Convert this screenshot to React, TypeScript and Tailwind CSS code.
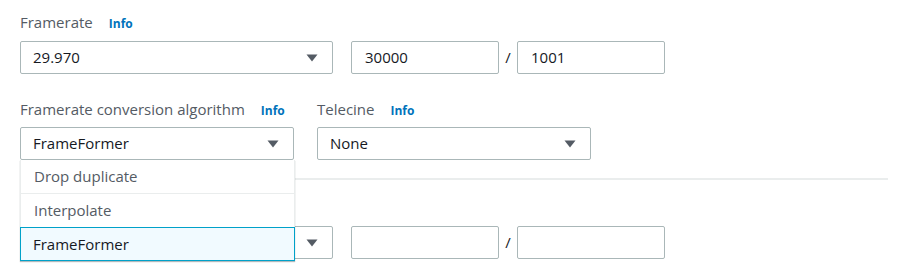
import React from "react";

const Arrow = () => (
  <svg width="12" height="8" viewBox="0 0 12 8" className="shrink-0">
    <path d="M0.5 0.5 H11.5 L6 7.5 Z" fill="#545b64" />
  </svg>
);

const Label = ({ text }: { text: string }) => (
  <div className="flex items-baseline h-[20px] gap-[16px]">
    <span className="text-[15px] text-[#545b64] leading-[20px]">{text}</span>
    <span className="text-[12px] font-bold text-[#0073bb] leading-[20px]">Info</span>
  </div>
);

const Select = ({ value, w }: { value: string; w: string }) => (
  <div
    className={`${w} h-[33px] border border-[#aab7b8] rounded-[2px] bg-white flex items-center justify-between pl-[12px] pr-[14px]`}
  >
    <span className="text-[15px] text-[#16191f]">{value}</span>
    <Arrow />
  </div>
);

const Input = ({ value }: { value: string }) => (
  <div className="w-[148px] h-[33px] border border-[#aab7b8] rounded-[2px] bg-white flex items-center pl-[13px]">
    <span className="text-[15px] text-[#16191f]">{value}</span>
  </div>
);

const Ratio = ({ a, b }: { a: string; b: string }) => (
  <div className="flex items-center ml-[18px]">
    <Input value={a} />
    <span className="w-[18px] text-center text-[15px] text-[#16191f]">/</span>
    <Input value={b} />
  </div>
);

export default function App() {
  return (
    <div className="w-[902px] h-[272px] bg-white pl-[20px] pt-[12px] font-['Open_Sans',sans-serif] overflow-hidden">
      <Label text="Framerate" />
      <div className="flex items-center mt-[9px]">
        <Select value="29.970" w="w-[313px]" />
        <Ratio a="30000" b="1001" />
      </div>

      <div className="flex mt-[25px]">
        <div className="w-[274px] relative z-10">
          <Label text="Framerate conversion algorithm" />
          <div className="mt-[8px] relative">
            <Select value="FrameFormer" w="w-[274px]" />
            <div className="absolute top-full left-0 w-[275px] bg-white border-x border-[#eaeded] shadow-[0_1px_1px_rgba(0,28,36,0.3)]">
              <div className="h-[34px] flex items-center pl-[13px] border-b border-[#eaeded] text-[15px] text-[#545b64]">
                Drop duplicate
              </div>
              <div className="h-[33px] flex items-center pl-[13px] text-[15px] text-[#545b64]">
                Interpolate
              </div>
              <div className="h-[34px] flex items-center pl-[12px] border border-[#00a1c9] bg-[#f1faff] text-[15px] text-[#16191f] -mx-px">
                FrameFormer
              </div>
            </div>
          </div>
        </div>
        <div className="ml-[23px]">
          <Label text="Telecine" />
          <div className="mt-[8px]">
            <Select value="None" w="w-[274px]" />
          </div>
        </div>
      </div>

      <div className="mt-[18px] w-[868px] h-[2px] bg-[#eaeded]" />

      <div className="mt-[18px]">
        <div className="h-[20px]" />
        <div className="flex items-center mt-[8px]">
          <Select value="" w="w-[313px]" />
          <Ratio a="" b="" />
        </div>
      </div>
    </div>
  );
}
